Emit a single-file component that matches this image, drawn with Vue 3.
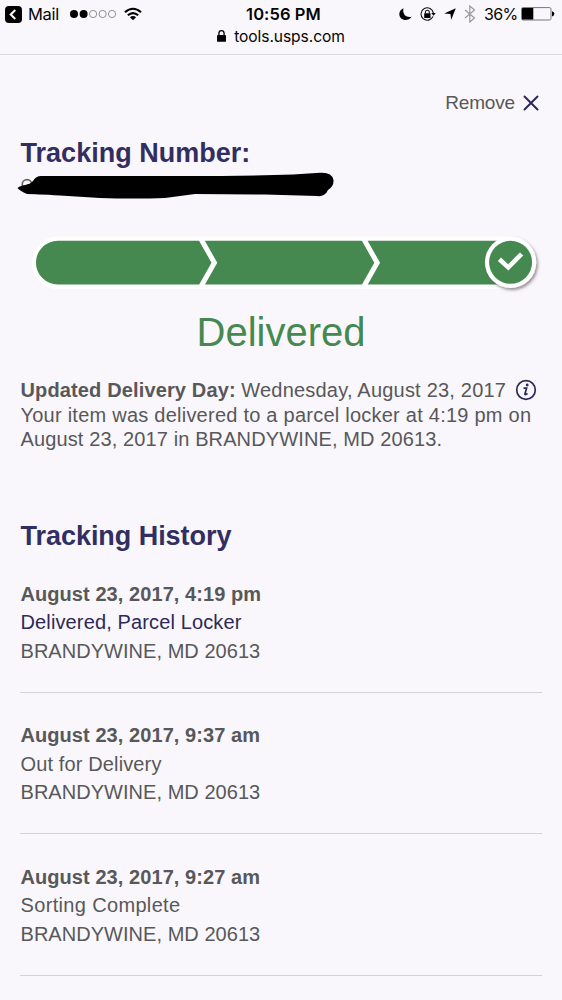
<script setup>
const events = [
  { time: 'August 23, 2017, 4:19 pm', status: 'Delivered, Parcel Locker', place: 'BRANDYWINE, MD 20613', link: true },
  { time: 'August 23, 2017, 9:37 am', status: 'Out for Delivery', place: 'BRANDYWINE, MD 20613' },
  { time: 'August 23, 2017, 9:27 am', status: 'Sorting Complete', place: 'BRANDYWINE, MD 20613', wide: true },
]
</script>

<template>
  <div class="screen">
    <header class="browser">
      <div class="status">
        <div class="side left">
          <svg class="back" width="17" height="17" viewBox="0 0 17 17">
            <rect width="17" height="17" rx="4" fill="#000" />
            <path d="M10.3 4 5.7 8.5l4.6 4.5" fill="none" stroke="#fff" stroke-width="2" />
          </svg>
          <span class="mail">Mail</span>
          <svg class="signal" width="48" height="10" viewBox="0 0 48 10">
            <circle cx="4" cy="5" r="4" />
            <circle cx="13.6" cy="5" r="4" />
            <g fill="none" stroke="#777" stroke-width=".8">
              <circle cx="23.1" cy="5" r="3.6" />
              <circle cx="32.6" cy="5" r="3.6" />
              <circle cx="42" cy="5" r="3.6" />
            </g>
          </svg>
          <svg class="wifi" width="18" height="14" viewBox="0 0 18 14">
            <g fill="none" stroke="#000" stroke-width="2.1">
              <path d="M1 5.2Q9-1.7 17 5.2" />
              <path d="M3.8 8.3Q9 3.8 14.2 8.3" />
            </g>
            <path d="M5.9 10.2Q9 7.9 12.1 10.2L9 13.2Z" />
          </svg>
        </div>
        <span class="clock">10:56 PM</span>
        <div class="side right">
          <svg class="moon" width="13" height="13" viewBox="0 0 13 13">
            <path d="M4.5.3C3.1 5.8 6.9 10.1 12.6 8.8 8.6 14.6.3 12.2.3 6.1.3 3.5 2 1.3 4.5.3Z" />
          </svg>
          <svg class="rotation" width="16" height="15" viewBox="0 0 16 15">
            <path d="M13 9.4A6.2 6.2 0 1 1 13.4 6.2" fill="none" stroke="#111" stroke-width="1.1" />
            <path d="M11.2 6h4.5l-2.1 2.8Z" />
            <rect x="4.2" y="6.3" width="6.3" height="4.8" rx=".5" />
            <path d="M5.4 6.5V5.2a1.95 1.95 0 0 1 3.9 0v1.3" fill="none" stroke="#111" stroke-width="1.1" />
          </svg>
          <svg class="arrow" width="12" height="12" viewBox="0 0 12 12">
            <path d="M11.8.2 7.2 11.7 6.4 5.9.2 5.4Z" />
          </svg>
          <svg class="bluetooth" width="12" height="18" viewBox="0 0 12 18">
            <path d="M1 5l9.5 8L5.8 17V1l4.7 4L1 13" fill="none" stroke="#999" stroke-width="1.2" />
          </svg>
          <span class="percent">36%</span>
          <svg class="battery" width="34" height="14" viewBox="0 0 34 14">
            <rect x=".6" y=".6" width="29.4" height="12.4" rx="1.5" fill="none" stroke="#777" />
            <rect x="1" y="1" width="11.3" height="11.6" rx=".5" />
            <path d="M31 4.2q2.4.5 2.4 2.6T31 9.4Z" />
          </svg>
        </div>
      </div>
      <div class="address">
        <svg width="9" height="12" viewBox="0 0 9 12">
          <rect y="5" width="9" height="6.8" rx=".9" />
          <path d="M1.9 5.5V3.5a2.6 2.8 0 0 1 5.2 0v2" fill="none" stroke="#000" stroke-width="1.3" />
        </svg>
        <span>tools.usps.com</span>
      </div>
    </header>

    <main>
      <div class="remove">
        <span>Remove</span>
        <svg width="16" height="16" viewBox="0 0 16 16">
          <path d="M1.5 1.5l13 13M14.5 1.5l-13 13" stroke="#2c2957" stroke-width="2" stroke-linecap="round" />
        </svg>
      </div>
      <h2 class="number-title">Tracking Number:</h2>
      <svg class="redaction" width="320" height="30" viewBox="0 0 320 30">
        <circle cx="12" cy="12.5" r="4.8" fill="none" stroke="#666" stroke-width="1.7" />
        <path d="M2.5 16C7 12 14 14 18 9Q21 4 26 4H168Q232 4 278 2.5L305 .8Q317 0 318.5 8Q319 14 313 18Q310 25 302 24L250 22.5L180 22L150 26Q120 27 85 26L45 23.5Q20 22 12 22Q5 19 2.5 16Z" />
      </svg>

      <svg class="progress" width="506" height="60" viewBox="0 0 506 60">
        <defs>
          <filter id="badge-shadow" x="-30%" y="-30%" width="160%" height="160%">
            <feDropShadow dx="1.5" dy="2" stdDeviation="1.8" flood-color="#514650" flood-opacity=".6" />
          </filter>
        </defs>
        <path d="M28 3.5H480V56H28A26 26 0 0 1 28 3.5Z" fill="#fff" />
        <path d="M27.8 7.8H480V51.5H27.8A21.85 21.85 0 0 1 27.8 7.8Z" fill="#458950" />
        <path d="M170.4 5 184.4 29.8 170.4 54.5M333.2 5 347.2 29.8 333.2 54.5" fill="none" stroke="#fff" stroke-width="5" />
        <circle cx="480.6" cy="29.3" r="25.7" fill="#fff" filter="url(#badge-shadow)" />
        <circle cx="480.6" cy="29.3" r="21.5" fill="#458950" />
        <path d="M469.4 26.2 478.3 34.4 491.6 21" fill="none" stroke="#fff" stroke-width="4.6" />
      </svg>

      <h1>Delivered</h1>
      <section class="summary">
        <p class="day">
          <b>Updated Delivery Day:</b><span>Wednesday, August 23, 2017</span>
          <svg width="22" height="22" viewBox="0 0 22 22">
            <circle cx="11" cy="11" r="9.3" fill="none" stroke="#2c2957" stroke-width="1.7" />
            <circle cx="12.2" cy="6" r="1.4" fill="#2c2957" />
            <path d="M8.5 9.2h3.1L9.9 15q-.2 1.4 2.6-.5" fill="none" stroke="#2c2957" stroke-width="1.7" />
          </svg>
        </p>
        <p class="line-a">Your item was delivered to a parcel locker at 4:19 pm on</p>
        <p class="line-b">August 23, 2017 in BRANDYWINE, MD 20613.</p>
      </section>

      <h2 class="history-title">Tracking History</h2>
      <article v-for="event in events" :key="event.time">
        <b>{{ event.time }}</b>
        <span class="event-status" :class="{ link: event.link, wide: event.wide }">{{ event.status }}</span>
        <span class="place">{{ event.place }}</span>
      </article>
    </main>
  </div>
</template>

<style>
body { background: #f9f7fb; }
</style>

<style scoped>
.screen {
  height: 1000px;
  overflow: hidden;
  background: #f9f7fb;
  color: #58575a;
  font: 20px "Liberation Sans", Arial, sans-serif;
}
svg { display: block; flex: none; }
h1, h2, p { margin: 0; white-space: nowrap; }
.browser {
  box-sizing: border-box;
  height: 55px;
  padding-top: 4px;
  border-bottom: 1px solid #d9d7dc;
  color: #050505;
  font: 17px Inter, "Liberation Sans", sans-serif;
}
.status { display: grid; grid-template-columns: 1fr auto 1fr; height: 20px; align-items: center; line-height: 20px; }
.side { display: flex; align-items: center; }
.left { padding-left: 5px; }
.mail { width: 43px; padding-left: 6px; font-size: 16.5px; letter-spacing: -.3px; }
.signal { margin-right: 6px; margin-left: -1px; }
.clock { padding-left: 5px; font-weight: 600; font-size: 16.5px; letter-spacing: .1px; }
.right { justify-content: flex-end; padding-right: 7px; }
.moon { margin-right: 8px; }
.rotation { margin-right: 8px; }
.arrow { margin-right: 8px; }
.bluetooth { margin-right: 8px; }
.percent { width: 37px; font-size: 16px; letter-spacing: -.6px; }
.address { display: flex; justify-content: center; align-items: center; height: 24px; gap: 8px; font-size: 15.6px; letter-spacing: -.08px; }
main { padding: 0 20px; }
.remove { display: flex; justify-content: flex-end; align-items: center; height: 24px; margin-top: 36px; padding-right: 3px; gap: 8px; }
.remove span { font-size: 19px; letter-spacing: -.15px; }
h2 { padding-left: .6px; color: #322e61; font-size: 27px; font-weight: 700; line-height: 30px; }
.number-title { margin-top: 23px; }
.redaction { margin: 4px 0 0 -5px; }
.progress { margin: 31px 0 0 10px; overflow: visible; }
h1 { margin-top: 17px; color: #458950; font-size: 40px; font-weight: 400; line-height: 44px; text-align: center; }
.summary { margin-top: 24px; padding-left: .5px; line-height: 24.5px; }
.day { display: flex; align-items: center; height: 24.5px; }
.day b { letter-spacing: .14px; }
.day span { margin-left: 5.5px; letter-spacing: .21px; }
.day svg { margin-left: auto; margin-right: 5px; }
.line-a { letter-spacing: .24px; }
.line-b { letter-spacing: .12px; }
.history-title { margin-top: 69px; margin-bottom: 1px; letter-spacing: -.05px; }
article { display: flex; flex-direction: column; box-sizing: border-box; height: 141.4px; padding-top: 28.5px; border-bottom: 1px solid #d4d2d8; line-height: 28.4px; white-space: nowrap; }
article b { padding-left: .5px; letter-spacing: .07px; }
.event-status { padding-left: .5px; letter-spacing: .13px; }
.event-status.wide { letter-spacing: .34px; }
.place { padding-left: .5px; letter-spacing: .04px; }
.link { color: #2c2957; }
</style>
